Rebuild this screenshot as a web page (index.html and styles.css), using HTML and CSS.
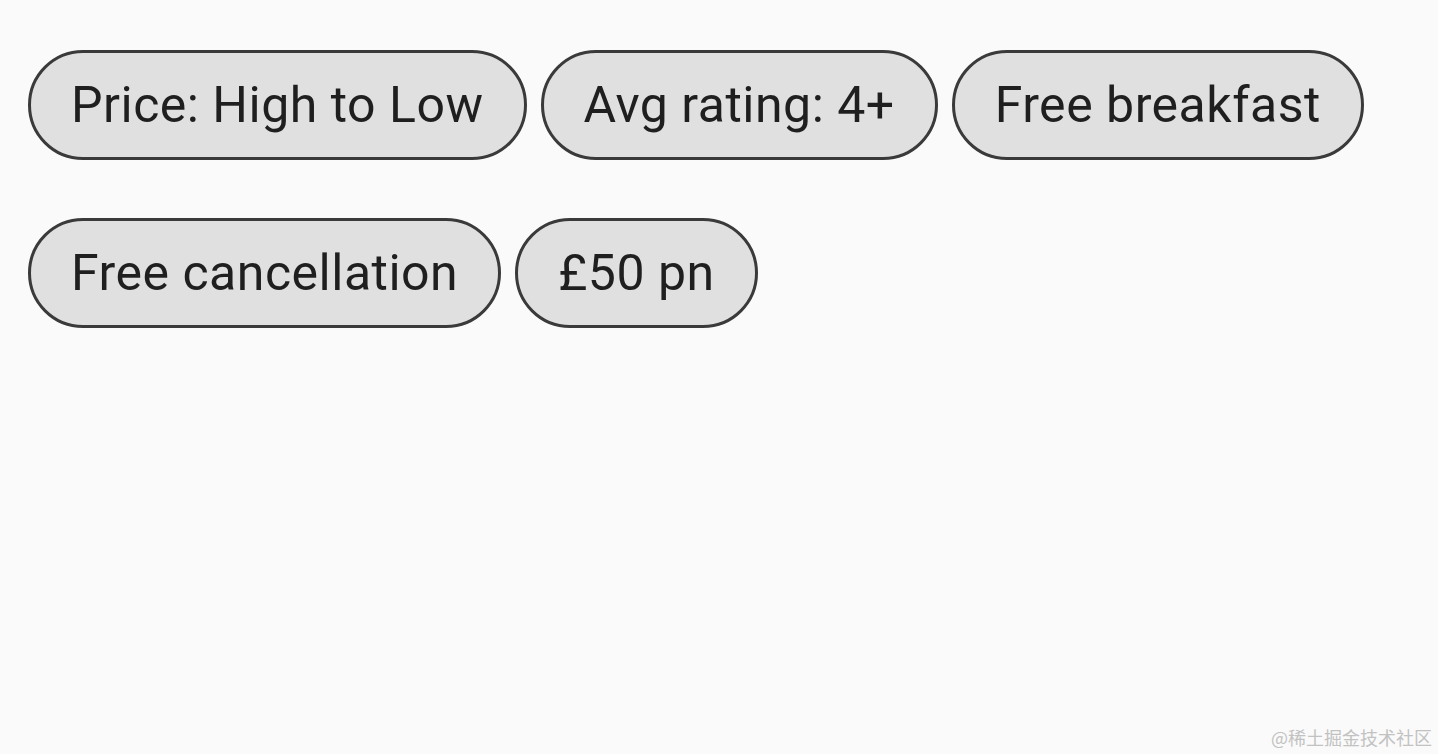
FILE: index.html
```html
<!DOCTYPE html>
<html lang="en">
  <head>
    <meta charset="UTF-8" />
    <meta name="viewport" content="width=device-width, initial-scale=1.0" />
    <title>Filter chips</title>
    <link rel="stylesheet" href="styles.css">
  </head>
  <body>
    <div class="chip-group">
      <div class="chip">Price: High to Low</div>
      <div class="chip">Avg rating: 4+</div>
      <div class="chip">Free breakfast</div>
      <div class="chip">Free cancellation</div>
      <div class="chip">£50 pn</div>
    </div>
    <p class="watermark">@稀土掘金技术社区</p>
  </body>
</html>
```

FILE: styles.css
```css
html,
body {
  height: 100%;
}
body {
  font-family: "Roboto", sans-serif;
  margin: 0;
  padding: 0;
  background-color: #fafafa;
  position: relative;
  overflow: hidden;
}
.chip-group {
  display: flex;
  flex-wrap: wrap;
  width: 1360px;
  column-gap: 14px;
  row-gap: 58px;
  padding: 50px 0 0 28px;
}
.chip {
  box-sizing: border-box;
  height: 110px;
  padding: 0 40px 0 40px;
  display: flex;
  align-items: center;
  border: 3px solid #3a3a3a;
  border-radius: 55px;
  background-color: #e0e0e0;
  color: #1f1f1f;
  font-size: 50px;
  letter-spacing: 0.5px;
  line-height: 1;
}
.watermark {
  position: absolute;
  right: 6px;
  bottom: 4px;
  margin: 0;
  font-family: "Noto Sans CJK SC", sans-serif;
  font-size: 18px;
  color: #c2c2c2;
}
```
